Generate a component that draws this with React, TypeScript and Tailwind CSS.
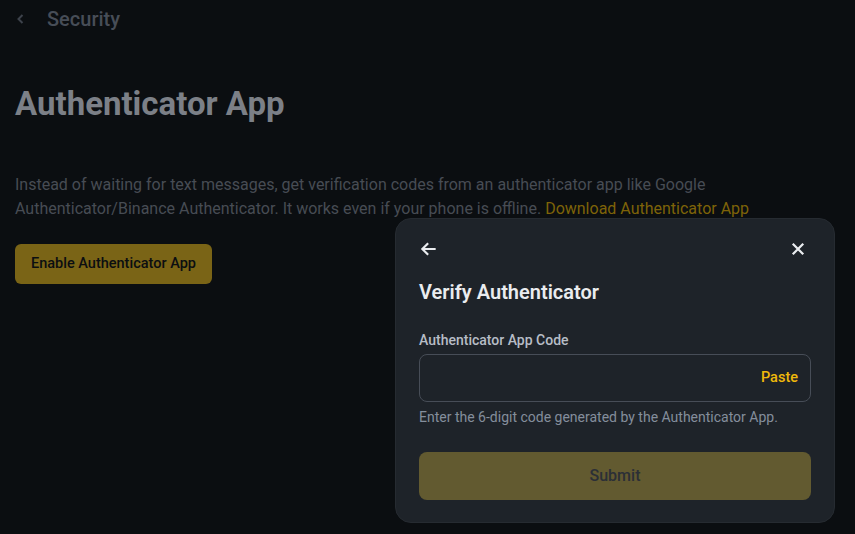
import { useState } from "react";

const font = { fontFamily: "Roboto, 'Noto Sans', sans-serif" };

const App = () => {
  const [code, setCode] = useState("");

  return (
    <div className="relative min-h-screen w-full overflow-hidden bg-[#0b0e11]" style={font}>
      {/* Page content (dimmed behind modal) */}
      <div className="px-[15px]">
        <div className="flex h-[38px] items-center gap-[20px]">
          <svg width="12" height="12" viewBox="0 0 12 12" className="text-[#3d424b]">
            <path d="M7.5 2L3.5 6l4 4" fill="none" stroke="currentColor" strokeWidth="2" />
          </svg>
          <span className="text-[20px] font-medium text-[#474d57]">Security</span>
        </div>
        <h1 className="mt-[44px] text-[33px] font-bold leading-[44px] text-[#7c8087]">
          Authenticator App
        </h1>
        <p className="mt-[47px] max-w-[760px] text-[16px] leading-[24px] text-[#474c54]">
          Instead of waiting for text messages, get verification codes from an authenticator app like Google
          Authenticator/Binance Authenticator. It works even if your phone is offline.{" "}
          <span className="text-[#7e6308]">Download Authenticator App</span>
        </p>
        <button className="mt-[23px] h-[40px] rounded-[6px] bg-[#7a6416] px-[16px] text-[14.5px] font-medium text-[#0b0e11]">
          Enable Authenticator App
        </button>
      </div>

      {/* Modal */}
      <div className="absolute left-[395px] top-[218px] w-[440px] rounded-[16px] border border-[#262b31] bg-[#1e2329] px-[23px] pb-[22px] pt-[18px]">
        <div className="flex h-[24px] items-center justify-between">
          <svg width="20" height="20" viewBox="0 0 24 24" className="text-[#eaecef]">
            <path d="M20 12H5M11 5l-7 7 7 7" fill="none" stroke="currentColor" strokeWidth="2.6" />
          </svg>
          <svg width="18" height="18" viewBox="0 0 24 24" className="mr-[4px] text-[#eaecef]">
            <path d="M5 5l14 14M19 5L5 19" fill="none" stroke="currentColor" strokeWidth="3" />
          </svg>
        </div>
        <h2 className="mt-[17px] text-[20px] font-semibold leading-[28px] text-[#eaecef]">
          Verify Authenticator
        </h2>
        <div className="mt-[24px] text-[14px] font-medium leading-[20px] text-[#b7bdc6]">
          Authenticator App Code
        </div>
        <div className="mt-[4px] flex h-[48px] items-center rounded-[8px] border border-[#474d57] px-[12px]">
          <input
            value={code}
            onChange={(e) => setCode(e.target.value)}
            className="h-full flex-1 bg-transparent text-[14px] text-[#eaecef] outline-none"
          />
          <span className="text-[14.5px] font-medium text-[#f0b90b]">Paste</span>
        </div>
        <div className="mt-[5px] text-[14px] leading-[20px] text-[#848e9c]">
          Enter the 6-digit code generated by the Authenticator App.
        </div>
        <button className="mt-[25px] h-[48px] w-full rounded-[8px] bg-[#625a30] text-[16px] font-medium text-[#2b2f36]">
          Submit
        </button>
      </div>
    </div>
  );
};

export default App;
